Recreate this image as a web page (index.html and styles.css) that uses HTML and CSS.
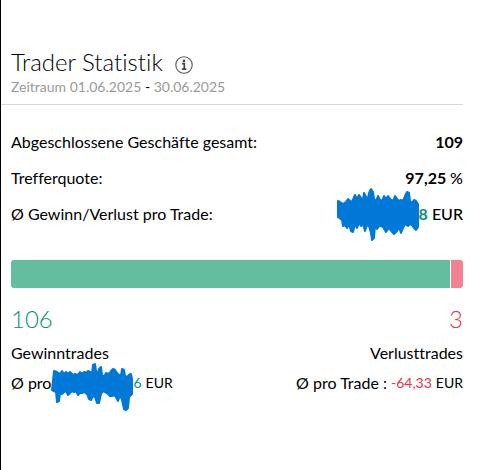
FILE: index.html
```html
<!DOCTYPE html>
<html lang="de">
<head>
  <meta charset="UTF-8">
  <meta name="viewport" content="width=device-width, initial-scale=1">
  <title>Trader Statistik</title>
  <link rel="stylesheet" href="styles.css">
</head>
<body>
  <main class="stats">
    <!-- HEADER -->
    <header class="stats-header">
      <div class="title-row">
        <h1 class="title">Trader Statistik</h1>
        <button class="info-button" type="button" aria-label="Information">
          <svg width="18" height="18" viewBox="0 0 18 18" fill="none">
            <circle cx="9" cy="9" r="8.2" stroke="#555" stroke-width="1.1"/>
            <circle cx="9" cy="4.9" r="1.3" fill="#444"/>
            <path d="M7 7.6h2.3v5.4M6.8 13.2h4.6" stroke="#444" stroke-width="1.7"/>
          </svg>
        </button>
      </div>
      <p class="period">Zeitraum 01.06.2025 <span class="dash">-</span> 30.06.2025</p>
    </header>

    <!-- KEY FIGURES -->
    <dl class="figures">
      <div class="figure-row">
        <dt>Abgeschlossene Geschäfte gesamt:</dt>
        <dd>109</dd>
      </div>
      <div class="figure-row">
        <dt>Trefferquote:</dt>
        <dd>97,25 <span class="unit">%</span></dd>
      </div>
      <div class="figure-row">
        <dt>Ø Gewinn/Verlust pro Trade:</dt>
        <dd class="redacted-value">
          <span class="redacted">
            <svg class="scribble" width="82" height="52" viewBox="0 0 82 52" aria-hidden="true">
              <path d="M1 13L3 14L6 16L9 14L11 11L13 13L15 14L17 9L18 7L20 11L22 7L24 10L26 12L27 5L29 9L31 11L32 5L34 1L36 4L37 11L39 13L41 8L43 12L45 13L47 8L49 11L51 8L54 12L56 13L58 8L60 11L62 13L64 12L66 13L68 8L70 4L72 5L73 13L75 15L77 12L79 13L81 16L81 39L79 42L77 40L75 37L73 36L71 38L68 36L66 40L64 45L62 39L60 43L57 46L55 44L52 40L49 44L46 39L44 38L42 38L40 41L38 37L37 50L35 52L34 45L32 38L30 37L28 43L26 36L24 38L22 35L20 40L18 36L16 44L14 43L12 36L10 40L8 37L6 38L5 32L1 29Z"/>
            </svg>
          </span>
          <span class="gain">8</span><span class="currency">EUR</span>
        </dd>
      </div>
    </dl>

    <!-- WIN / LOSS BAR -->
    <div class="ratio-bar" role="img" aria-label="106 Gewinntrades, 3 Verlusttrades">
      <div class="ratio-win" style="flex-grow: 97.25"></div>
      <div class="ratio-loss" style="flex-grow: 2.75"></div>
    </div>

    <!-- WIN / LOSS DETAILS -->
    <div class="results">
      <section class="result">
        <div class="count gain">106</div>
        <h2 class="result-label">Gewinntrades</h2>
        <p class="average">
          <span>Ø pro</span>
          <span class="redacted">
            <svg class="scribble" width="82" height="56" viewBox="0 -8 82 56" aria-hidden="true">
              <path d="M3 8L6 9L9 11L11 8L13 11L15 9L17 11L19 9L22 12L24 11L27 12L29 9L31 11L33 9L35 10L37 8L39 9L41 10L42 2L44 1L45 8L47 11L48 6L50 4L51 12L53 14L55 10L58 11L60 8L62 6L64 7L66 10L68 12L70 13L71 6L73 7L74 13L76 14L78 12L80 11L81 16L81 31L78 34L77 45L75 47L73 46L71 37L69 32L67 38L65 34L63 32L61 33L59 33L57 31L54 29L52 28L50 31L48 40L46 40L44 34L42 33L40 37L38 36L36 31L33 29L31 30L29 30L27 32L25 28L23 29L21 28L19 30L17 32L15 28L13 29L11 31L9 30L8 38L6 39L5 29L1 27Z"/>
            </svg>
          </span>
          <span class="amount gain">6</span><span class="amount currency">EUR</span>
        </p>
      </section>
      <section class="result result-loss">
        <div class="count loss">3</div>
        <h2 class="result-label">Verlusttrades</h2>
        <p class="average">
          <span>Ø pro Trade :</span>
          <span class="amount loss amount-full">-64,33</span><span class="amount currency">EUR</span>
        </p>
      </section>
    </div>
  </main>
</body>
</html>
```
FILE: styles.css
```css
* {
  box-sizing: border-box;
}

body {
  margin: 0;
  min-height: 100vh;
  border-left: 1px solid #000;
  background: #fff;
  color: #000;
  font-family: Lato, "Open Sans", sans-serif;
  font-size: 16px;
  line-height: 20px;
  font-variant-ligatures: none;
}

h1, h2, p, dl, dd {
  margin: 0;
  font-weight: 400;
}

.stats {
  padding: 46px 26px 0 0;
}

/* HEADER */
.stats-header {
  padding: 0 10px 8px;
  border-bottom: 1px solid #d8d8d8;
}

.title-row {
  display: flex;
  align-items: center;
  gap: 12px;
}

.title {
  font-size: 24px;
  font-weight: 300;
  line-height: 32px;
}

.info-button {
  display: flex;
  margin-top: 6px;
  padding: 0;
  border: 0;
  background: none;
  cursor: pointer;
}

.period {
  color: #999;
  font-size: 14px;
  line-height: 18px;
}

.dash {
  color: #000;
}

/* KEY FIGURES */
.figures {
  padding: 19px 0 0 10px;
}

.figure-row {
  display: flex;
  justify-content: space-between;
  line-height: 36px;
}

.figure-row dd {
  font-weight: 700;
}

.figure-row .unit,
.figure-row .currency {
  font-weight: 500;
}

.redacted-value {
  display: flex;
}

.currency {
  margin-left: 4px;
}

.gain {
  color: #0b9068;
}

.loss {
  color: #e5304f;
}

/* hand-drawn marker over a hidden amount */
.redacted {
  position: relative;
  width: 82px;
}

.scribble {
  position: absolute;
  top: 50%;
  left: 0;
  transform: translateY(-50%);
  fill: #0078d7;
  stroke: #0078d7;
  stroke-width: 2;
  stroke-linejoin: round;
  overflow: visible;
}

/* WIN / LOSS BAR */
.ratio-bar {
  display: flex;
  gap: 1px;
  height: 28px;
  margin: 28px 0 0 10px;
  border-radius: 3px;
  overflow: hidden;
}

.ratio-win {
  background: #63bd9e;
}

.ratio-loss {
  background: #f28191;
}

/* WIN / LOSS DETAILS */
.results {
  display: flex;
  justify-content: space-between;
  padding: 15px 0 0 10px;
}

.result-loss {
  text-align: right;
}

.count {
  font-size: 24px;
  font-weight: 300;
  line-height: 32px;
}

.result-label {
  margin-top: 8px;
  font-size: 16px;
  line-height: 20px;
}

.average {
  display: flex;
  margin-top: 10px;
}

.result-loss .average {
  justify-content: flex-end;
}

.amount {
  font-size: 14px;
}

.amount-full {
  margin-left: 4px;
}
```
